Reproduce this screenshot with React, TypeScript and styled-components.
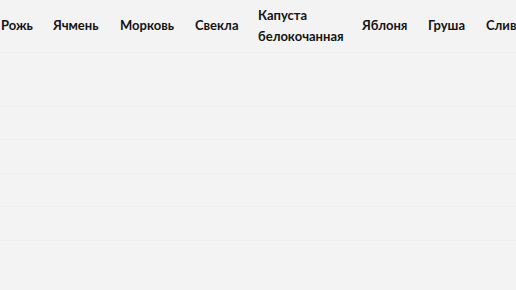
import React from "react";
import styled, { createGlobalStyle } from "styled-components";

const Global = createGlobalStyle`
  html, body { margin: 0; padding: 0; background: #f3f3f3; }
  body { font-family: "Lato", "Open Sans", sans-serif; color: #141414; }
`;

const Viewport = styled.div`
  width: 516px;
  height: 290px;
  overflow: hidden;
  background: #f3f3f3;
`;

const Table = styled.table`
  border-collapse: collapse;
  table-layout: fixed;
  margin-left: -11px;
  width: 555px;
`;

const HeadCell = styled.th`
  height: 52px;
  padding: 0 12px;
  box-sizing: border-box;
  text-align: left;
  vertical-align: middle;
  font-size: 13px;
  font-weight: 700;
  line-height: 21px;
  white-space: normal;
  overflow: visible;
  border-bottom: 1px solid #eeeef2;
`;

const BodyRow = styled.tr<{ $h: number }>`
  height: ${(p) => p.$h}px;
`;

const BodyCell = styled.td`
  padding: 0;
  border-bottom: 1px solid #eeeef2;
`;

const columns = [
  { name: "Рожь", w: 52 },
  { name: "Ячмень", w: 67 },
  { name: "Морковь", w: 75 },
  { name: "Свекла", w: 63 },
  { name: "Капуста белокочанная", w: 104 },
  { name: "Яблоня", w: 66 },
  { name: "Груша", w: 58 },
  { name: "Слива", w: 70 },
];

const rows = [54, 33, 34, 33, 34];

export default function App() {
  return (
    <Viewport>
      <Global />
      <Table>
        <colgroup>
          {columns.map((c) => (
            <col key={c.name} style={{ width: c.w }} />
          ))}
        </colgroup>
        <thead>
          <tr>
            {columns.map((c) => (
              <HeadCell key={c.name}>{c.name}</HeadCell>
            ))}
          </tr>
        </thead>
        <tbody>
          {rows.map((h, i) => (
            <BodyRow key={i} $h={h}>
              {columns.map((c) => (
                <BodyCell key={c.name} />
              ))}
            </BodyRow>
          ))}
        </tbody>
      </Table>
    </Viewport>
  );
}
